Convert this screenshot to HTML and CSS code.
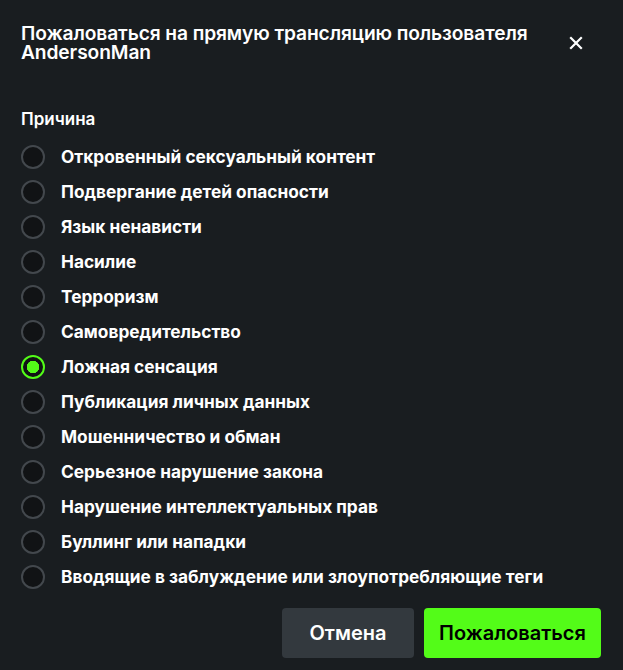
FILE: index.html
```html
<!DOCTYPE html>
<html lang="ru">
<head>
    <meta charset="UTF-8">
    <meta name="viewport" content="width=device-width, initial-scale=1.0">
    <title>Пожаловаться</title>
    <link rel="stylesheet" href="styles.css">
</head>
<body>
    <div class="modal">
        <div class="modal-header">
            <h1>Пожаловаться на прямую трансляцию пользователя AndersonMan</h1>
            <button class="close" aria-label="Закрыть">
                <svg width="14" height="14" viewBox="0 0 14 14"><path d="M2 2L12 12M12 2L2 12" stroke="#fff" stroke-width="2.2" stroke-linecap="square"/></svg>
            </button>
        </div>

        <div class="label">Причина</div>

        <div class="options">
            <label class="option"><input type="radio" name="reason"><span>Откровенный сексуальный контент</span></label>
            <label class="option"><input type="radio" name="reason"><span>Подвергание детей опасности</span></label>
            <label class="option"><input type="radio" name="reason"><span>Язык ненависти</span></label>
            <label class="option"><input type="radio" name="reason"><span>Насилие</span></label>
            <label class="option"><input type="radio" name="reason"><span>Терроризм</span></label>
            <label class="option"><input type="radio" name="reason"><span>Самовредительство</span></label>
            <label class="option"><input type="radio" name="reason" checked><span>Ложная сенсация</span></label>
            <label class="option"><input type="radio" name="reason"><span>Публикация личных данных</span></label>
            <label class="option"><input type="radio" name="reason"><span>Мошенничество и обман</span></label>
            <label class="option"><input type="radio" name="reason"><span>Серьезное нарушение закона</span></label>
            <label class="option"><input type="radio" name="reason"><span>Нарушение интеллектуальных прав</span></label>
            <label class="option"><input type="radio" name="reason"><span>Буллинг или нападки</span></label>
            <label class="option"><input type="radio" name="reason"><span>Вводящие в заблуждение или злоупотребляющие теги</span></label>
        </div>

        <div class="actions">
            <button class="btn btn-cancel">Отмена</button>
            <button class="btn btn-report">Пожаловаться</button>
        </div>
    </div>
</body>
</html>
```

FILE: styles.css
```css
html, body {
    margin: 0;
    background: #191d20;
}
body {
    font-family: Inter, "Noto Sans", sans-serif;
    color: #fff;
}
.modal {
    padding: 24px 22px 12px 21px;
}
.modal-header {
    display: flex;
    align-items: flex-start;
    justify-content: space-between;
    padding-right: 18px;
}
.modal-header h1 {
    margin: 0;
    width: 530px;
    font-size: 19.2px;
    line-height: 19px;
    font-weight: 600;
    letter-spacing: -0.1px;
}
.close {
    background: none;
    border: none;
    padding: 0;
    margin-top: 12px;
    cursor: pointer;
    display: flex;
}
.label {
    margin-top: 47px;
    font-size: 17px;
    font-weight: 600;
    line-height: 20px;
}
.options {
    margin-top: 16px;
    display: flex;
    flex-direction: column;
    gap: 11px;
}
.option {
    display: flex;
    align-items: center;
    gap: 16px;
    font-size: 17.3px;
    font-weight: 700;
    line-height: 24px;
    cursor: pointer;
}
.option input {
    appearance: none;
    margin: 0;
    width: 24px;
    height: 24px;
    border-radius: 50%;
    border: 2px solid #43484d;
    background: #111315;
    box-sizing: border-box;
    flex-shrink: 0;
}
.option input:checked {
    border-color: #53fc18;
    background: radial-gradient(circle, #53fc18 0 6px, #111315 6.5px);
}
.actions {
    margin-top: 19px;
    display: flex;
    justify-content: flex-end;
    gap: 10px;
}
.btn {
    height: 50px;
    border: none;
    border-radius: 4px;
    font-family: Inter, "Noto Sans", sans-serif;
    font-size: 20px;
    font-weight: 600;
    cursor: pointer;
}
.btn-cancel {
    width: 132px;
    background: #33393e;
    color: #fff;
}
.btn-report {
    width: 177px;
    background: #53fc18;
    color: #000;
}
```
